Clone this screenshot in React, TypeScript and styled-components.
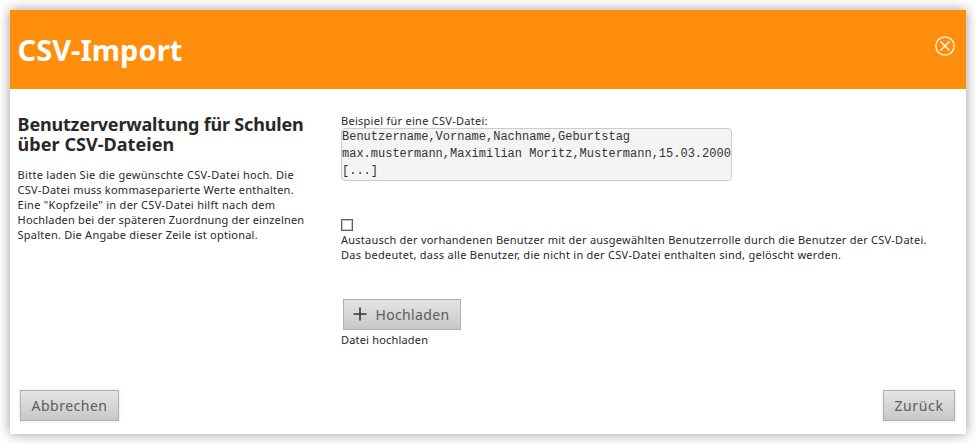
import React from 'react';
import styled, { createGlobalStyle } from 'styled-components';

const GlobalStyle = createGlobalStyle`
  * { box-sizing: border-box; }
  body {
    margin: 0;
    background: #fff;
    color: #282828;
    font: 11px/15px "Noto Sans", sans-serif;
  }
`;

const Page = styled.div`
  height: 444px;
  padding: 10px;
  overflow: hidden;
`;

const Dialog = styled.section`
  display: flex;
  flex-direction: column;
  height: 424px;
  background: #fff;
  box-shadow: 0 0 12px rgba(0, 0, 0, 0.4);
`;

const Header = styled.header`
  display: flex;
  align-items: flex-start;
  justify-content: space-between;
  height: 79px;
  padding: 20px 11px 0 7.5px;
  background: #ff8e0d;
  color: #fff;
`;

const Title = styled.h1`
  margin: 0;
  font-size: 29px;
  font-weight: 700;
  line-height: 40px;
  letter-spacing: 0.05px;
`;

const CloseButton = styled.button`
  width: 20px;
  height: 20px;
  margin-top: 6px;
  padding: 0;
  border: 0;
  background: none;
  color: #fff;

  svg { display: block; }
`;

const Content = styled.main`
  display: grid;
  grid-template-columns: 323.4px 1fr;
  height: 291px;
  padding-left: 7.6px;
`;

const Intro = styled.div`
  padding-top: 25px;
`;

const Heading = styled.h2`
  margin: 0 0 13px;
  font-size: 18px;
  font-weight: 700;
  line-height: 20px;
`;

const Form = styled.div`
  display: flex;
  flex-direction: column;
  align-items: flex-start;
  padding-top: 24px;
`;

const Line = styled.span<{ $spacing: number }>`
  display: block;
  white-space: nowrap;
  letter-spacing: ${({ $spacing }) => $spacing}px;
`;

const Code = styled.pre`
  width: 391px;
  height: 53px;
  margin: 0;
  border: 1px solid #ccc;
  border-radius: 4px;
  background: #f4f4f4;
  color: #333;
  font: 12px/17px "Liberation Mono", monospace;
  white-space: pre;
`;

const Checkbox = styled.input`
  appearance: none;
  width: 12px;
  height: 12px;
  margin: 38px 0 1px;
  border: 1px solid #5e5e5e;
  background: #fff;
  box-shadow: inset 0 0 0 1px #c4c4c4;
`;

const Button = styled.button<{ $spacing: number; $width: number }>`
  display: flex;
  align-items: center;
  justify-content: center;
  width: ${({ $width }) => $width}px;
  height: 31px;
  padding: 0;
  border: 1px solid #b0b0b0;
  background: linear-gradient(#e4e4e4, #c8c8c8);
  box-shadow: 0 0 3px rgba(0, 0, 0, 0.12);
  color: #5c5c5c;
  font: 14px/20px "Noto Sans", sans-serif;
  letter-spacing: ${({ $spacing }) => $spacing}px;
`;

const UploadButton = styled(Button)`
  margin: 37px 0 2px 2px;
  padding-right: 1px;
  box-shadow: none;

  svg { margin: 0 8px 2px 0; }
`;

const Footer = styled.footer`
  display: flex;
  justify-content: space-between;
  padding: 10px 11px 0 10px;
`;

const CloseIcon = () => (
  <svg width="20" height="20" viewBox="0 0 20 20" fill="none" stroke="currentColor" strokeWidth="1.2">
    <circle cx="10" cy="10" r="9.2" />
    <path d="M5.5 5.5l9 9M14.5 5.5l-9 9" />
  </svg>
);

const PlusIcon = () => (
  <svg width="14" height="14" viewBox="0 0 14 14" stroke="#333" strokeWidth="1.6">
    <path d="M7 .5v13M.5 7h13" />
  </svg>
);

const csvExample = `Benutzername,Vorname,Nachname,Geburtstag
max.mustermann,Maximilian Moritz,Mustermann,15.03.2000
[...]`;

export default function App() {
  return (
    <>
      <GlobalStyle />
      <Page>
        <Dialog>
          <Header>
            <Title>CSV-Import</Title>
            <CloseButton aria-label="Schließen"><CloseIcon /></CloseButton>
          </Header>
          <Content>
            <Intro>
              <Heading>
                <Line $spacing={-0.18}>Benutzerverwaltung für Schulen</Line>
                <Line $spacing={0.05}>über CSV-Dateien</Line>
              </Heading>
              <Line $spacing={0.281}>Bitte laden Sie die gewünschte CSV-Datei hoch. Die</Line>
              <Line $spacing={0.239}>CSV-Datei muss kommaseparierte Werte enthalten.</Line>
              <Line $spacing={0.284}>Eine "Kopfzeile" in der CSV-Datei hilft nach dem</Line>
              <Line $spacing={0.19}>Hochladen bei der späteren Zuordnung der einzelnen</Line>
              <Line $spacing={0.231}>Spalten. Die Angabe dieser Zeile ist optional.</Line>
            </Intro>
            <Form>
              <Line $spacing={0.272}>Beispiel für eine CSV-Datei:</Line>
              <Code>{csvExample}</Code>
              <Checkbox type="checkbox" id="replace" />
              <label htmlFor="replace">
                <Line $spacing={0.235}>Austausch der vorhandenen Benutzer mit der ausgewählten Benutzerrolle durch die Benutzer der CSV-Datei.</Line>
                <Line $spacing={0.271}>Das bedeutet, dass alle Benutzer, die nicht in der CSV-Datei enthalten sind, gelöscht werden.</Line>
              </label>
              <UploadButton $spacing={0.35} $width={118}>
                <PlusIcon />
                Hochladen
              </UploadButton>
              <Line $spacing={0.187}>Datei hochladen</Line>
            </Form>
          </Content>
          <Footer>
            <Button $spacing={0.5} $width={99}>Abbrechen</Button>
            <Button $spacing={0.64} $width={72}>Zurück</Button>
          </Footer>
        </Dialog>
      </Page>
    </>
  );
}
